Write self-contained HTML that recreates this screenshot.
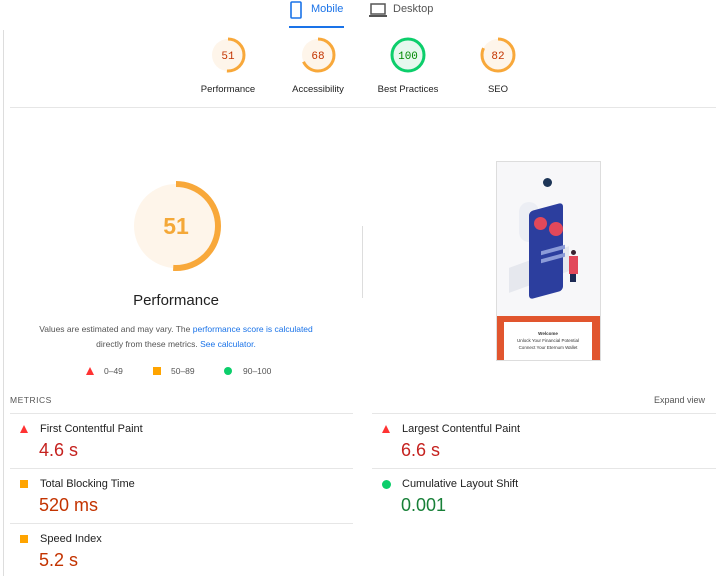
<!DOCTYPE html>
<html><head><meta charset="utf-8"><style>
*{margin:0;padding:0;box-sizing:border-box}
body{width:718px;height:576px;background:#fff;position:relative;overflow:hidden;font-family:"Liberation Sans",sans-serif;color:#212121}
.a{position:absolute}
.lbl{font-size:9.5px;color:#212121;text-align:center;width:100px}
.hl{position:absolute;height:1px;background:#e6e6e6}
.mt{font-size:11px;color:#212121}
.mv{font-size:18px}
</style></head><body>
<svg class="a" style="left:290px;top:1px" width="12" height="18" viewBox="0 0 12 18"><rect x="1" y="1" width="10" height="16" rx="1" fill="none" stroke="#1a73e8" stroke-width="1.6"/></svg>
<div class="a" style="left:311px;top:3px;font-size:11px;color:#1a73e8">Mobile</div>
<div class="a" style="left:289px;top:26px;width:55px;height:2px;background:#1a73e8"></div>
<svg class="a" style="left:369px;top:3px" width="18" height="15" viewBox="0 0 18 15"><rect x="2" y="1" width="14" height="10" fill="none" stroke="#555" stroke-width="1.5"/><rect x="0" y="12" width="18" height="2" fill="#555"/></svg>
<div class="a" style="left:393px;top:3px;font-size:11px;color:#555">Desktop</div>
<div class="a" style="left:3px;top:30px;width:1px;height:546px;background:#ddd"></div>
<svg class="a" style="left:0;top:0" width="718" height="110">
<g fill="none" stroke-width="3">
<circle cx="228" cy="55" r="16" fill="#fef5ea" stroke="none"/>
<circle cx="228" cy="55" r="16" stroke="#f8a83a" stroke-dasharray="51.3 200" transform="rotate(-90 228 55)"/>
<circle cx="318" cy="55" r="16" fill="#fef5ea" stroke="none"/>
<circle cx="318" cy="55" r="16" stroke="#f8a83a" stroke-dasharray="68.3 200" transform="rotate(-90 318 55)"/>
<circle cx="408" cy="55" r="16" fill="#e6f8ee" stroke="#0cce6b"/>
<circle cx="498" cy="55" r="16" fill="#fef5ea" stroke="none"/>
<circle cx="498" cy="55" r="16" stroke="#f8a83a" stroke-dasharray="82.4 200" transform="rotate(-90 498 55)"/>
</g>
<g font-family="Liberation Mono,monospace" font-size="11" text-anchor="middle">
<text x="228" y="59" fill="#c33300">51</text><text x="318" y="59" fill="#c33300">68</text>
<text x="408" y="59" fill="#008800">100</text><text x="498" y="59" fill="#c33300">82</text>
</g>
</svg>
<div class="a lbl" style="left:178px;top:84px">Performance</div>
<div class="a lbl" style="left:268px;top:84px">Accessibility</div>
<div class="a lbl" style="left:358px;top:84px">Best Practices</div>
<div class="a lbl" style="left:448px;top:84px">SEO</div>
<div class="hl" style="left:10px;top:107px;width:706px"></div>
<svg class="a" style="left:126px;top:176px" width="100" height="100">
<circle cx="50" cy="50" r="42" fill="#fef5ea"/>
<circle cx="50" cy="50" r="42" fill="none" stroke="#f8a83a" stroke-width="6" stroke-dasharray="134.6 300" transform="rotate(-90 50 50)"/>
<text x="50" y="58" text-anchor="middle" font-family="Liberation Sans,sans-serif" font-size="23" fill="#f4a838" font-weight="bold">51</text>
</svg>
<div class="a" style="left:76px;top:292px;width:200px;text-align:center;font-size:15px;color:#212121">Performance</div>
<div class="a" style="left:20px;top:322px;width:312px;text-align:center;font-size:8.5px;line-height:15px;color:#555">Values are estimated and may vary. The <span style="color:#1a73e8">performance score is calculated</span><br>directly from these metrics. <span style="color:#1a73e8">See calculator.</span></div>
<svg class="a" style="left:85px;top:366px" width="10" height="10"><polygon points="5,1 9,9 1,9" fill="#f33"/></svg>
<div class="a" style="left:104px;top:366px;font-size:8.5px;color:#555">0–49</div>
<div class="a" style="left:153px;top:367px;width:8px;height:8px;background:#ffa400"></div>
<div class="a" style="left:171px;top:366px;font-size:8.5px;color:#555">50–89</div>
<div class="a" style="left:224px;top:367px;width:8px;height:8px;border-radius:50%;background:#0cce6b"></div>
<div class="a" style="left:243px;top:366px;font-size:8.5px;color:#555">90–100</div>
<div class="a" style="left:362px;top:226px;width:1px;height:72px;background:#ddd"></div>
<div class="a" style="left:496px;top:161px;width:105px;height:200px;border:1px solid #ddd;background:#f7f7f9;overflow:hidden">
<div class="a" style="left:46px;top:16px;width:9px;height:9px;border-radius:50%;background:#1d3557"></div>
<div class="a" style="left:12px;top:95px;width:60px;height:25px;background:#e6e8ee;transform:skewY(-20deg)"></div>
<div class="a" style="left:22px;top:40px;width:20px;height:40px;background:#eceef4;border-radius:10px"></div>
<div class="a" style="left:32px;top:45px;width:34px;height:88px;background:#2c3e9e;transform:skewY(-15deg);border-radius:4px"></div>
<div class="a" style="left:37px;top:55px;width:13px;height:13px;border-radius:50%;background:#e2485a"></div>
<div class="a" style="left:52px;top:60px;width:14px;height:14px;border-radius:50%;background:#e2485a"></div>
<div class="a" style="left:44px;top:86px;width:24px;height:4px;background:#8c9bd8;transform:skewY(-15deg)"></div>
<div class="a" style="left:44px;top:94px;width:24px;height:4px;background:#8c9bd8;transform:skewY(-15deg)"></div>
<div class="a" style="left:74px;top:88px;width:5px;height:5px;border-radius:50%;background:#3a2230"></div>
<div class="a" style="left:72px;top:94px;width:9px;height:18px;background:#e2485a"></div>
<div class="a" style="left:73px;top:112px;width:6px;height:8px;background:#1d2a55"></div>
<div class="a" style="left:0;top:154px;width:103px;height:46px;background:#e1552e"></div>
<div class="a" style="left:7px;top:160px;width:88px;height:40px;background:#fff;text-align:center;font-size:4.5px;color:#333;padding-top:8px;line-height:7px"><b>Welcome</b><br>Unlock Your Financial Potential<br>Connect Your Eternum Wallet</div>
</div>
<div class="a" style="left:10px;top:395px;font-size:8.5px;letter-spacing:.5px;color:#555">METRICS</div>
<div class="a" style="left:654px;top:395px;font-size:9px;color:#555">Expand view</div>
<div class="hl" style="left:10px;top:413px;width:343px"></div>
<div class="hl" style="left:372px;top:413px;width:344px"></div>
<div class="hl" style="left:10px;top:468px;width:343px"></div>
<div class="hl" style="left:372px;top:468px;width:344px"></div>
<div class="hl" style="left:10px;top:523px;width:343px"></div>
<svg class="a" style="left:19px;top:424px" width="10" height="10"><polygon points="5,1 9,9 1,9" fill="#f33"/></svg>
<div class="a mt" style="left:40px;top:423px">First Contentful Paint</div>
<div class="a mv" style="left:39px;top:440px;color:#c5221f">4.6 s</div>
<div class="a" style="left:20px;top:480px;width:8px;height:8px;background:#ffa400"></div>
<div class="a mt" style="left:40px;top:478px">Total Blocking Time</div>
<div class="a mv" style="left:39px;top:495px;color:#c33300">520 ms</div>
<div class="a" style="left:20px;top:535px;width:8px;height:8px;background:#ffa400"></div>
<div class="a mt" style="left:40px;top:533px">Speed Index</div>
<div class="a mv" style="left:39px;top:550px;color:#c33300">5.2 s</div>
<svg class="a" style="left:381px;top:424px" width="10" height="10"><polygon points="5,1 9,9 1,9" fill="#f33"/></svg>
<div class="a mt" style="left:402px;top:423px">Largest Contentful Paint</div>
<div class="a mv" style="left:401px;top:440px;color:#c5221f">6.6 s</div>
<div class="a" style="left:382px;top:480px;width:9px;height:9px;border-radius:50%;background:#0cce6b"></div>
<div class="a mt" style="left:402px;top:478px">Cumulative Layout Shift</div>
<div class="a mv" style="left:401px;top:495px;color:#188038">0.001</div>
</body></html>
